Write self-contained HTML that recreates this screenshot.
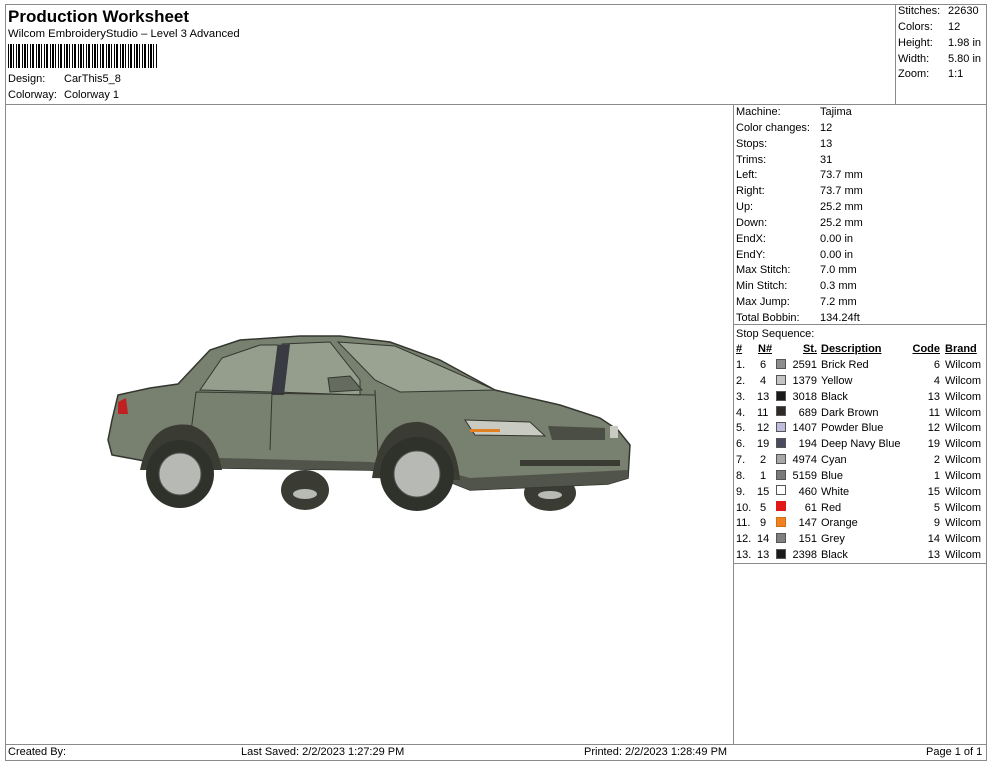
<!DOCTYPE html>
<html><head><meta charset="utf-8"><style>
*{margin:0;padding:0;box-sizing:border-box}
body{width:990px;height:762px;background:#fff;position:relative;overflow:hidden;font-family:"Liberation Sans",Arial,sans-serif;font-size:11px;color:#000}
.a{position:absolute;white-space:nowrap;line-height:13px}
.l{position:absolute;background:#8a8a8a}
.sw{position:absolute;width:10px;height:10px;border:1px solid #555}
u{text-decoration:underline}
</style></head><body>
<div class="l" style="left:5px;top:4px;width:981px;height:1px"></div>
<div class="l" style="left:5px;top:4px;width:1px;height:757px"></div>
<div class="l" style="left:986px;top:4px;width:1px;height:757px"></div>
<div class="l" style="left:5px;top:760px;width:982px;height:1px"></div>
<div class="l" style="left:5px;top:104px;width:981px;height:1px"></div>
<div class="l" style="left:895px;top:4px;width:1px;height:100px"></div>
<div class="l" style="left:733px;top:104px;width:1px;height:640px"></div>
<div class="l" style="left:733px;top:324px;width:253px;height:1px"></div>
<div class="l" style="left:733px;top:563px;width:253px;height:1px"></div>
<div class="l" style="left:5px;top:744px;width:981px;height:1px"></div>

<div class="a" style="left:8px;top:7px;font-size:17px;font-weight:bold;line-height:19px">Production Worksheet</div>
<div class="a" style="left:8px;top:28px;font-size:11.3px">Wilcom EmbroideryStudio – Level 3 Advanced</div>
<div class="a" style="left:8px;top:44px;width:150px;height:24px;background:repeating-linear-gradient(90deg,#000 0 1px,#fff 1px 2px,#000 2px 4px,#fff 4px 5px,#000 5px 6px,#fff 6px 8px,#000 8px 9px,#fff 9px 10px,#000 10px 12px,#fff 12px 14px)"></div>
<div class="a" style="left:8px;top:73px">Design:</div><div class="a" style="left:64px;top:73px">CarThis5_8</div>
<div class="a" style="left:8px;top:89px">Colorway:</div><div class="a" style="left:64px;top:89px">Colorway 1</div>

<div class="a" style="left:898px;top:5px">Stitches:</div><div class="a" style="left:948px;top:5px">22630</div>
<div class="a" style="left:898px;top:21px">Colors:</div><div class="a" style="left:948px;top:21px">12</div>
<div class="a" style="left:898px;top:37px">Height:</div><div class="a" style="left:948px;top:37px">1.98 in</div>
<div class="a" style="left:898px;top:53px">Width:</div><div class="a" style="left:948px;top:53px">5.80 in</div>
<div class="a" style="left:898px;top:68px">Zoom:</div><div class="a" style="left:948px;top:68px">1:1</div>

<div style="position:absolute;left:736px;top:105px;line-height:15.85px">
<div>Machine:</div><div>Color changes:</div><div>Stops:</div><div>Trims:</div><div>Left:</div><div>Right:</div><div>Up:</div><div>Down:</div><div>EndX:</div><div>EndY:</div><div>Max Stitch:</div><div>Min Stitch:</div><div>Max Jump:</div><div>Total Bobbin:</div><div>Stop Sequence:</div></div>
<div style="position:absolute;left:820px;top:105px;line-height:15.85px">
<div>Tajima</div><div>12</div><div>13</div><div>31</div><div>73.7 mm</div><div>73.7 mm</div><div>25.2 mm</div><div>25.2 mm</div><div>0.00 in</div><div>0.00 in</div><div>7.0 mm</div><div>0.3 mm</div><div>7.2 mm</div><div>134.24ft</div></div>

<div style="position:absolute;left:736px;top:342px;line-height:15.85px;font-weight:bold"><u>#</u></div>
<div style="position:absolute;left:758px;top:342px;line-height:15.85px;font-weight:bold"><u>N#</u></div>
<div style="position:absolute;left:790px;top:342px;width:27px;text-align:right;line-height:15.85px;font-weight:bold"><u>St.</u></div>
<div style="position:absolute;left:821px;top:342px;line-height:15.85px;font-weight:bold"><u>Description</u></div>
<div style="position:absolute;left:900px;top:342px;width:40px;text-align:right;line-height:15.85px;font-weight:bold"><u>Code</u></div>
<div style="position:absolute;left:945px;top:342px;line-height:15.85px;font-weight:bold"><u>Brand</u></div>

<div style="position:absolute;left:736px;top:358px;line-height:15.85px">
<div>1.</div><div>2.</div><div>3.</div><div>4.</div><div>5.</div><div>6.</div><div>7.</div><div>8.</div><div>9.</div><div>10.</div><div>11.</div><div>12.</div><div>13.</div></div>
<div style="position:absolute;left:757px;top:358px;line-height:15.85px">
<div>&nbsp;6</div><div>&nbsp;4</div><div>13</div><div>11</div><div>12</div><div>19</div><div>&nbsp;2</div><div>&nbsp;1</div><div>15</div><div>&nbsp;5</div><div>&nbsp;9</div><div>14</div><div>13</div></div>
<div style="position:absolute;left:780px;top:358px;width:37px;text-align:right;line-height:15.85px">
<div>2591</div><div>1379</div><div>3018</div><div>689</div><div>1407</div><div>194</div><div>4974</div><div>5159</div><div>460</div><div>61</div><div>147</div><div>151</div><div>2398</div></div>
<div style="position:absolute;left:821px;top:358px;line-height:15.85px">
<div>Brick Red</div><div>Yellow</div><div>Black</div><div>Dark Brown</div><div>Powder Blue</div><div>Deep Navy Blue</div><div>Cyan</div><div>Blue</div><div>White</div><div>Red</div><div>Orange</div><div>Grey</div><div>Black</div></div>
<div style="position:absolute;left:900px;top:358px;width:40px;text-align:right;line-height:15.85px">
<div>6</div><div>4</div><div>13</div><div>11</div><div>12</div><div>19</div><div>2</div><div>1</div><div>15</div><div>5</div><div>9</div><div>14</div><div>13</div></div>
<div style="position:absolute;left:945px;top:358px;line-height:15.85px">
<div>Wilcom</div><div>Wilcom</div><div>Wilcom</div><div>Wilcom</div><div>Wilcom</div><div>Wilcom</div><div>Wilcom</div><div>Wilcom</div><div>Wilcom</div><div>Wilcom</div><div>Wilcom</div><div>Wilcom</div><div>Wilcom</div></div>
<div class="sw" style="left:776px;top:359px;background:#8d8d8d"></div>
<div class="sw" style="left:776px;top:375px;background:#c4c4c4"></div>
<div class="sw" style="left:776px;top:391px;background:#1a1a1a"></div>
<div class="sw" style="left:776px;top:406px;background:#2e2a28"></div>
<div class="sw" style="left:776px;top:422px;background:#c0bce0"></div>
<div class="sw" style="left:776px;top:438px;background:#4a4a5e"></div>
<div class="sw" style="left:776px;top:454px;background:#a8a8a8"></div>
<div class="sw" style="left:776px;top:470px;background:#7a7a7a"></div>
<div class="sw" style="left:776px;top:485px;background:#fff"></div>
<div class="sw" style="left:776px;top:501px;background:#e01818;border-color:#e01818"></div>
<div class="sw" style="left:776px;top:517px;background:#f08020;border-color:#d07010"></div>
<div class="sw" style="left:776px;top:533px;background:#808080"></div>
<div class="sw" style="left:776px;top:549px;background:#1a1a1a"></div>

<div class="a" style="left:8px;top:746px">Created By:</div>
<div class="a" style="left:241px;top:746px">Last Saved: 2/2/2023 1:27:29 PM</div>
<div class="a" style="left:584px;top:746px">Printed: 2/2/2023 1:28:49 PM</div>
<div class="a" style="left:926px;top:746px">Page 1 of 1</div>

<svg style="position:absolute;left:0;top:0" width="990" height="762">
<ellipse cx="305" cy="490" rx="24" ry="20" fill="#3a3c34"/>
<ellipse cx="305" cy="494" rx="12" ry="5" fill="#b8bab4"/>
<ellipse cx="550" cy="493" rx="26" ry="18" fill="#3a3c34"/>
<ellipse cx="550" cy="495" rx="12" ry="4" fill="#b8bab4"/>
<path d="M108,440 L112,420 L118,395 L150,388 L178,384 L210,350 L240,340 L300,336 L340,336 L390,342 L440,360 L495,390 L560,405 L600,418 L618,430 L630,445 L628,478 L608,484 L470,490 L440,478 L370,470 L220,468 L150,462 L112,455 Z" fill="#788070" stroke="#33362e" stroke-width="1.5"/>
<path d="M150,462 L220,468 L370,470 L440,478 L470,490 L608,484 L628,478 L628,470 L470,478 L440,470 L370,462 L220,458 L150,452 Z" fill="#50544a"/>
<path d="M200,390 L222,358 L260,345 L278,345 L272,392 Z" fill="#959d8d" stroke="#33362e"/>
<path d="M276,392 L282,344 L330,342 L360,380 L360,395 Z" fill="#959d8d" stroke="#33362e"/>
<path d="M338,342 L395,346 L450,370 L495,390 L400,392 L375,380 Z" fill="#9aa292" stroke="#33362e"/>
<path d="M278,345 L290,344 L284,395 L272,395 Z" fill="#3a3a42"/>
<path d="M328,378 L350,376 L362,390 L330,392 Z" fill="#656c5f" stroke="#33362e"/>
<path d="M196,392 L190,440 L200,455 M272,392 L270,450 M375,390 L378,455 M196,392 L375,395" fill="none" stroke="#33362e"/>
<path d="M140,470 Q150,420 190,425 Q215,432 222,470 Z" fill="#3a3c34"/>
<path d="M372,478 Q380,420 420,422 Q455,428 460,480 Z" fill="#3a3c34"/>
<circle cx="180" cy="474" r="34" fill="#2f312b"/>
<circle cx="180" cy="474" r="21" fill="#b6b9b4" stroke="#555"/>
<circle cx="417" cy="474" r="37" fill="#2f312b"/>
<circle cx="417" cy="474" r="23" fill="#b6b9b4" stroke="#555"/>
<path d="M465,420 L530,422 L545,436 L475,435 Z" fill="#c9cbc2" stroke="#33362e"/>
<rect x="470" y="429" width="30" height="3" fill="#e08020"/>
<path d="M548,426 L605,428 L605,440 L552,440 Z" fill="#4a4e44"/>
<rect x="610" y="426" width="8" height="12" fill="#c9cbc2"/>
<rect x="520" y="460" width="100" height="6" fill="#3a3c34"/>
<path d="M118,402 L126,398 L128,414 L118,414 Z" fill="#c02020"/>
</svg>
</body></html>
